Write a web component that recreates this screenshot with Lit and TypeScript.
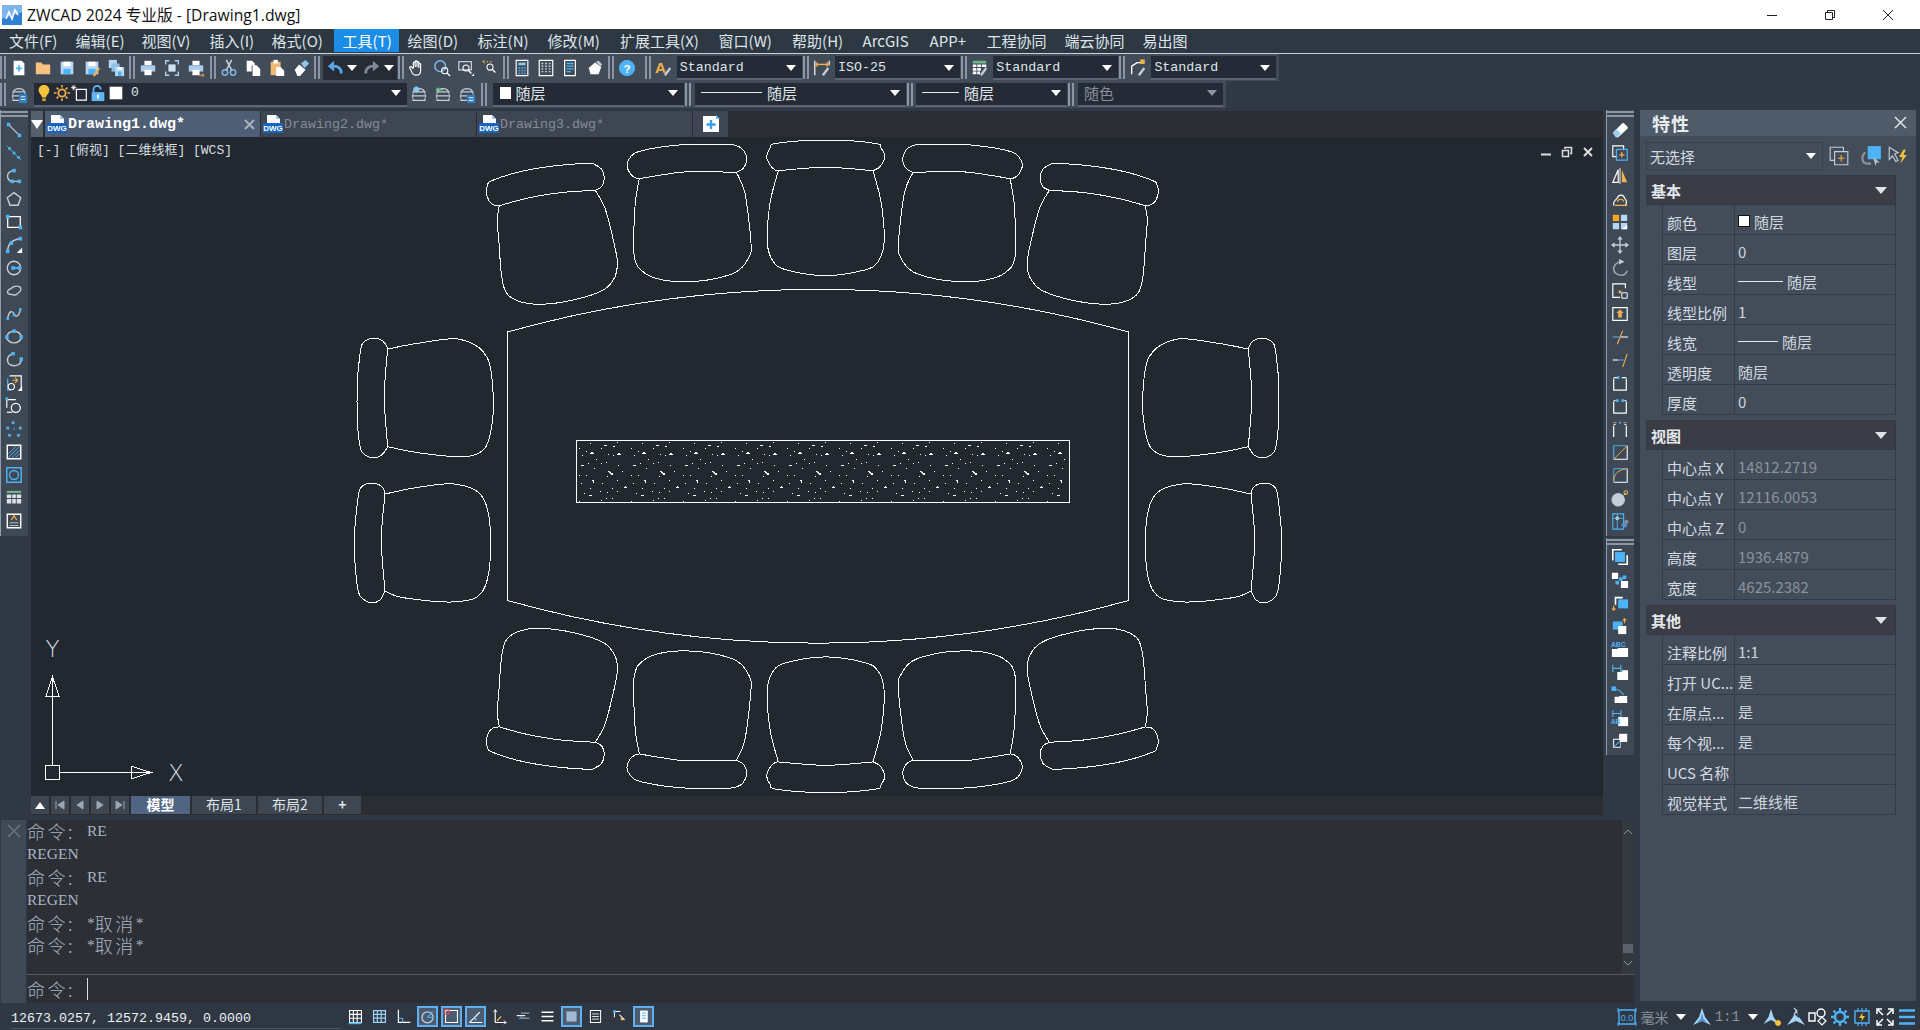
import { LitElement, html, css, svg } from 'lit'
import { customElement } from 'lit/decorators.js'

const W = '#ffffff'
const B = '#4db3f5'
const O = '#f2b04a'
const G = '#c3cedb'

// small drawing helpers for the 20x20 icons
const ln = (d: string, c = W, w = 1.3) => svg`<path d=${d} fill="none" stroke=${c} stroke-width=${w} />`
const fl = (d: string, c = W) => svg`<path d=${d} fill=${c} />`
const nd = (x: number, y: number, c = B, s = 4) => svg`<rect x=${x - s / 2} y=${y - s / 2} width=${s} height=${s} fill=${c} />`
const ci = (x: number, y: number, r: number, c = W, w = 1.3, f = 'none') => svg`<circle cx=${x} cy=${y} r=${r} fill=${f} stroke=${c} stroke-width=${w} />`
const pencil = ln('M11 18l6-8', G, 2.6)
const printer = [fl('M6 2h8v5H6z'), fl('M2 7h16v7H2z', '#a9cdee'), fl('M6 12h8v6H6z')]
const floppy = [fl('M3 3h14v14H3z', '#b9d6f2'), fl('M6 3h8v5H6z'), fl('M6 11h8v6H6z', B)]
const lens = (x: number, y: number) => [ci(x, y, 3.4, W, 1.2), ln(`M${x + 2.4} ${y + 2.4}l3.6 3.6`, W, 1.5)]
const stack = [ln('M4 6c2-4 10-4 12 0', G), ln('M2.5 6.5h15M2.5 11h15M2.5 16h15', G, 1.4), ln('M4 7l-1.5 4 1.5 5M16 7l1.5 4-1.5 5', G, 1)]

const ICONS: Record<string, unknown> = {
  new: [fl('M4 2h9l3 3v13H4z'), ln('M10 7v7M6.5 10.5h7', B, 2)],
  open: fl('M2 4h6l2 2h8v11H2z', '#f6c27f'),
  save: floppy,
  saveas: [floppy, ln('M12 19l6-9', O, 2.4)],
  saveall: [fl('M2 1h9v9H2z', '#b9d6f2'), fl('M5 5h9v9H5z', '#8fc0ea'), fl('M9 9h10v10H9z', '#b9d6f2'), fl('M12 14h4v5h-4z', B), fl('M11.5 9h5v3h-5z')],
  print: printer,
  preview: [ln('M3 6V2h4M13 2h4v4M17 14v4h-4M7 18H3v-4', '#9fd0f5', 1.6), fl('M6 6h8v8H6z', '#cfe0f0')],
  print2: [printer, ln('M13 18h6M17 16l2 2-2 2', O, 1)],
  cut: [ci(5.5, 15, 3, '#7db8ea', 1.6), ci(14.5, 15, 3, '#7db8ea', 1.6), ln('M7 12.5L13 1M13 12.5L7 1', G, 1.8)],
  copy: [fl('M3 2h6l3 3v9H3z'), fl('M9 7h5l4 4v8H9z'), ln('M9 7v12', '#414b58', 1)],
  paste: [fl('M3 3h11v15H3z', '#f0b877'), fl('M6 1h5v4H6z'), fl('M9 9h5l4 4v6H9z')],
  brush: [fl('M3 12l5-6 7 6-6 7H6z'), fl('M10 5l5-4 4 4-5 5z', '#8fc6f0')],
  undo: [ln('M17 16c0-5-3-8-9-8', '#5aa6e6', 3), fl('M9 2L2 8l7 6z', '#5aa6e6')],
  redo: [ln('M3 16c0-5 3-8 9-8', '#808a96', 3), fl('M11 2l7 6-7 6z', '#808a96')],
  pan: ln('M6 10V4.5a1 1 0 012 0V9M8 9V3a1 1 0 012 0v6M10 9V4a1 1 0 012 0v6M12 10V6a1 1 0 012 0v7c0 3-2 5-5 5s-4-1-5-4l-2-4c-.5-1 1-2 2-1l2 2'),
  zoomrt: [ci(8, 8, 6, '#7db8ea', 1.6), lens(13, 13)],
  zoomwin: [ln('M2 3h14v9H2z', G, 1.4), lens(10, 10), fl('M19 16v3h-3z')],
  zprev: [ln('M4 3H2M6 3h2M10 3h2', O, 1.2), ln('M2 3l2-2M2 3l2 2', O, 1), lens(10, 9)],
  calc: [ln('M3.5 1.5h13v17h-13z', W, 1.3), fl('M6 4h8v3H6z', '#8fc6f0'), ln('M6 10h2M9 10h2M12 10h2M6 13h2M9 13h2M12 13h2M6 16h2M9 16h2M12 16h2', B, 1.4)],
  gridtool: [ln('M2.5 1.5h15v17h-15z', W, 1.3), ln('M5 5h2M9 5h2M13 5h2M5 8h2M9 8h2M13 8h2M5 11h2M9 11h2M13 11h2M5 14h2M9 14h2M13 14h2', G, 1.6)],
  doc: [ln('M4 1.5h12v17H4z', W, 1.3), ln('M6 5h8M6 8h8M6 11h8M6 14h5', B, 1.4)],
  stamp: [fl('M3 10l7-6 7 5-3 8H5z'), fl('M11 3l5 5 2-2-4-4z', G)],
  help: [ci(10, 10, 8.5, B, 1, B), svg`<text x="10" y="15" text-anchor="middle" font-size="13" font-weight="700" font-family="Liberation Sans" fill="#fff">?</text>`],
  astyle: [svg`<text x="0" y="16" font-size="17" font-weight="700" font-family="Liberation Sans" fill=${O}>A</text>`, pencil],
  dimstyle: [ln('M2 2v16M18 2v5', W, 1.3), ln('M3 6h14', O, 1.6), ln('M5 3.5L3 6l2 2.5M15 3.5L17 6l-2 2.5', O, 1.2), pencil],
  tablestyle: [fl('M2 2h15v3H2z', '#6fb58a'), fl('M2 6h4v3H2zM7 6h4v3H7zM12 6h5v3h-5zM2 10h4v3H2zM7 10h4v3H7zM2 14h4v3H2zM7 14h3v3H7z'), pencil],
  mlstyle: [ln('M3 17V8l6-4h5', W, 1.5), nd(15, 3, O, 5), pencil],
  layer: [stack, fl('M10 9h9v10h-9z', '#2f7fc4'), ln('M12 12h5M12 15h5', W, 1)],
  layer2: [stack, ci(7, 4, 3, '#8fc6f0', 1, '#8fc6f0')],
  layer3: [stack, ln('M3 4h7M5 2L3 4l2 2', '#6fd08a', 1.5)],
  layer4: [stack, fl('M10 10h9v9h-9z', '#2f7fc4'), ln('M12 13h5M12 16h5', W, 1)],
  bulb: [fl('M10 1c4 0 6 3 6 6 0 3-3 5-4 8H8C7 12 4 10 4 7c0-3 2-6 6-6z', '#f5c33b'), fl('M8 16h4v3H8z', '#d9a32b')],
  sun: [ci(10, 10, 4, O, 2), ln('M10 1v3M10 16v3M1 10h3M16 10h3M4 4l2 2M14 14l2 2M16 4l-2 2M4 16l2-2', O, 1.8)],
  freeze: [ln('M6 6h11v12H6z', W, 1.3), ln('M3 1v6M0 4h6M1 2l4 4M5 2L1 6', W, .9)],
  lock: [ln('M5 9V6a4 4 0 018 0', '#5fb8f5', 2), fl('M3 9h14v10H3z', '#5fb8f5'), fl('M9 12h2v4H9z')],
  swatch: fl('M3 3h14v14H3z'),
  // left toolbar
  line: [ln('M4 4l12 12', G), nd(4, 4), nd(16, 16)],
  xline: [ln('M2 2l16 16', B, 1), nd(5, 5, B, 3), nd(10, 10, B, 3), nd(15, 15, B, 3)],
  pline: [ln('M10 4C4 4 2 9 3 12c1 3 3 4 5 4h8', G, 1.6), nd(10, 4), nd(8, 16), nd(16, 16)],
  polygon: ln('M10 3l7.5 5.5-3 8.5h-9l-3-8.5z', G, 1.6),
  rect: [ln('M3 4h14v12H3z', W, 1.4), nd(3, 4), nd(17, 16)],
  arc: [ln('M3 17C3 9 8 4 17 3', G, 1.6), nd(3, 17), nd(7, 8), nd(17, 3), fl('M19 13v6h-6z')],
  circle: [ci(10, 10, 7.5, G, 1.5), ln('M10 10h6', B, 2), nd(9, 10), nd(16, 10)],
  cloud: ln('M3 12c-1-3 2-4 4-5 2-2 6-3 8-2 3 0 3 3 2 5-1 2-3 2-4 4-2 1-4 0-5 0-2 0-4 0-5-2z', G, 1.5),
  spline: [ln('M3 14c2-8 5-8 7-4s5 3 7-4', G, 1.5), nd(3, 15, B, 3), nd(10, 11, B, 3), nd(17, 5, B, 3)],
  ellipse: [svg`<ellipse cx="10" cy="10" rx="8" ry="6.5" fill="none" stroke=${G} stroke-width="1.6" />`, nd(10, 3.5), nd(2, 10), nd(18, 10)],
  earc: [ln('M9 3C4 4 2 8 3 12s6 5 10 4 5-4 5-7', G, 1.6), nd(9, 3), nd(18, 9)],
  insert: [ln('M5 2h13v14', W, 1.3), ln('M3 5v13h4', B, 1.3), ln('M8 7h6M11 4l3 3-3 3', O, 1.2), ci(7, 14, 3.5, W, 1.2), fl('M19 14v5h-5z')],
  block: [ln('M2 3v9M2 3h10M12 3', W, 1.3), nd(2, 2, B, 3), ci(12, 12, 5, W, 1.4), ln('M2 17h6', W, 1.3)],
  points: [nd(9, 3, B, 3), nd(3, 9, B, 3), nd(17, 9, B, 3), nd(10, 10, '#2f7fc4', 2), nd(5, 17, B, 3), nd(15, 17, B, 3)],
  hatch: [ln('M2.5 2.5h15v15h-15z', W, 1.6), ln('M4 12l8-8M4 16l12-12M8 16l8-8M12 16l4-4', B, 1.1)],
  gradient: [ln('M2 2h16v16H2z', B, 1.6), ci(10, 10, 5, B, 1.5)],
  table: [fl('M2 2h16v2.5H2z', '#6fb58a'), fl('M2 6h5v4H2zM8 6h4v4H8zM13 6h5v4h-5zM2 11h5v5H2zM8 11h4v5H8zM13 11h5v5h-5z', '#dde3ea')],
  mtext: [ln('M2.5 2.5h15v15h-15z', W, 1.5), ln('M7 9l3-5 3 5', O, 1.3), ln('M5 12h10M5 15h10', G, 1)],
  // right toolbar, modify
  erase: [fl('M2 13L12 3c1-1 2-1 3 0l3 3c1 1 1 2 0 3L8 18H6z'), fl('M2 13l4-4 5 5-4 4H5z', '#9fcdf2')],
  copyo: [ln('M7 14H2V2h12v5', W, 1.3), ln('M6 6h12v12H6z', B, 1.4), ln('M12 9v6M9 12h6', O, 1.4)],
  mirror: [ln('M2 17L8 3v14z', W, 1.3), fl('M12 3l6 14h-6z', O), ln('M10 1v18', W, 1)],
  offset: [ln('M3 17c-1-4 2-6 4-8 1-4 7-5 8 0 2 2 3 5 1 8', W, 1.3), ln('M7 13c0-2 6-5 7 0M4 17h14', O, 1.3)],
  array: [fl('M2 2h7v7H2z', '#f5a623'), fl('M11 2h7v7h-7zM2 11h7v7H2z', '#b5d8f5'), fl('M11 11h7v7h-7z', '#b5d8f5'), fl('M18 13v5h-6z')],
  move: [ln('M10 2v16M2 10h16', G, 1.4), fl('M10 0l3 4H7zM10 20l-3-4h6zM0 10l4-3v6zM20 10l-4 3V7z', G)],
  rotate: [ln('M12 3C6 3 2 8 3 12s5 6 8 6 6-2 7-5', '#9aa7b6', 1.7), fl('M9 0l6 3-6 3z', G)],
  scale: [ln('M16 7V2H2v15h8', W, 1.3), nd(10, 11, O, 3), ln('M12 12h6v6h-6z', W, 1.1)],
  stretch: [ln('M2 3h16v14H2z', W, 1.3), fl('M10 5l4 4h-2v5H8V9H6z', O)],
  trim: [ln('M2 10h7', B, 1.2), ln('M11 10h8', W, 1.2), ln('M7 18l6-15', O, 1.2)],
  extend: [ln('M2 10h6', W, 1.2), ln('M8 10h6', B, 1.2), ln('M13 18l5-15', O, 1.2)],
  breakpt: [ln('M3 5v13h14V5', W, 1.3), ln('M3 4h4M12 4h5', W, 1.3), nd(8, 4, B, 3)],
  breakln: [ln('M3 5v13h14V5', W, 1.3), ln('M3 4h2M15 4h2', W, 1.3), nd(7, 4, B, 3), nd(13, 4, B, 3)],
  join: [ln('M3 6v13M17 6v13M3 5h2M15 5h2', W, 1.3), nd(10, 3, B, 2), ln('M3 3h3M17 3h-3', O, 1.1)],
  chamfer: [ln('M18 3v15H3', W, 1.2), ln('M3 3v15', B, 1.2), ln('M3 3h15', B, 1), ln('M3 18L18 3', O, 1)],
  fillet: [ln('M18 3v15H3', W, 1.2), ln('M3 3v15M3 3h15', B, 1), ln('M3 17C3 9 8 4 18 3', O, 1.1)],
  bomb: [ci(8, 12, 7, G, 1, G), ln('M14 7l2-2', W, 1), ci(16.5, 4, 2, O, 1.2)],
  props: [ln('M2 2h12v17H2z', B, 1.3), ln('M2 7h12M7 2v17', B, 1), ci(7, 7, 1.5, W, 1), fl('M12 13c2-2 5-1 6 1s-2 4-4 3-3-2-2-4z', '#4d8fd0'), ci(17, 11, 2, '#889', 1, '#889')],
  // right toolbar, draw order
  front: [ln('M2 14V2h10', W, 1.8), ln('M18 8v10H8', W, 1.8), fl('M4.500 4.500h11v11h-11z', B)],
  order2: [fl('M1 2h7v7H1zM11 11h8v8h-8z'), fl('M9 7h4v4H9z', B), fl('M5 11h4v4H5z', B), fl('M13 5h4v4h-4z', B)],
  above: [ln('M5 12V4h8', W, 1.8), fl('M8 6h11v10H8z', B), ln('M3 13v5', O, 1.4), ln('M1 16l2 2 2-2', O, 1.2)],
  under: [fl('M2 5h11v9H2z', B), fl('M8 10h9v9H8z'), ln('M15 7V2M13 4l2-2 2 2', O, 1.2)],
  ordertext: [svg`<text x="0" y="7.5" font-size="7.5" font-weight="700" font-family="Liberation Sans" fill=${B}>ABC</text>`, fl('M1 10h6l1-1h11v10H1z')],
  orderdim: [ln('M2 2v8M11 2v8M2 6h9', B, 1.3), fl('M7 10h5V8h7v11H7z')],
  orderlead: [nd(3, 3, B, 5), ln('M4 4c5-1 8 3 10 6', B, 1.3), fl('M4 12h5v-1h9v8H4z')],
  orderall: [ln('M2 1v8M11 1v8M2 5h9', B, 1.2), fl('M8 9h11v10H8z'), svg`<text x="0" y="17" font-size="7" font-weight="700" font-family="Liberation Sans" fill=${B}>AB</text>`],
  orderback: [fl('M9 2h9v9H9z'), ln('M3 8h7v9H3z', W, 1.2), fl('M4 9h6v7H4z', '#2f3844'), ln('M4 16l6-6', B, 1.2)],
  // status bar
  grid1: [ln('M3 3h14v14H3zM3 7.500h14M3 12h14M7.500 3v14M12 3v14', W, 1.3), ln('M2 18h15', B, 2)],
  grid2: ln('M3 3h14v14H3zM3 7.500h14M3 12h14M7.500 3v14M12 3v14', '#9fd0f5', 1.4),
  ortho: [ln('M4 2v15h14', W, 1.4), ln('M4 12h5v5', B, 1.2)],
  polar: [ci(10, 11, 6.5, G, 1.5), ln('M10 11l6-7M10 11h7', B, 1.2)],
  osnap: [ln('M3 3h14v14H3z', W, 1.3), ln('M2 2h5v5H2z', '#e84c4c', 1.4)],
  otrack: [ln('M3 17L15 5M3 17h15', W, 1.3), nd(10, 13, B, 3)],
  ducs: [ln('M5 2v15h13', W, 1.3), ln('M5 2L3 5M5 2l2 3M18 17l-3-2M18 17l-3 2', W, 1), ln('M7 15l5-5', O, 1.4)],
  dyn: [ln('M2 9h10', W, 1.3), ln('M7 6h10M7 12h10', G, 1), ln('M5 13l3-3', B, 1.3)],
  lwt: ln('M3 5h14M3 10h14M3 15h14', W, 2),
  transp: [fl('M4 4h12v12H4z', '#9fb8cf')],
  qp: [ln('M4 3h12v14H4z', W, 1.2), ln('M6 7h8M6 10h8M6 13h8', W, 1)],
  sel: [ln('M4 4h7M4 4v7', W, 1.2), nd(4, 4, B, 3), nd(13, 13, O, 3), ln('M10 8l6 6', W, 1.2)],
  model: [fl('M6 3h9v14H6z', W), ln('M8 6h5M8 9h5M8 12h5', B, 1.2)],
  paper: [ln('M2 3h16v14H2z', B, 1.4), ln('M1 1v4M19 1v4M1 15v4M19 15v4', B, 1), svg`<text x="10" y="14" text-anchor="middle" font-size="9" font-family="Liberation Sans" fill=${B}>0.0</text>`],
  anno: [fl('M10 1l3 9 6 8-9-4-9 4 6-8z', '#a9d3f5'), fl('M10 6l1.5 6 4 4-5.5-2-5.5 2 4-4z', '#4d96d8')],
  annoon: [fl('M8 2l2.5 8 5 7-7.5-4-7.5 4 5-7z', '#a9d3f5'), ci(15, 16, 2.5, '#f5c33b', 1, '#f5c33b')],
  annoauto: [fl('M10 2l3 8 6 8-9-4-9 4 6-8z', '#a9d3f5'), ln('M5 2l8 8', '#2f3743', 2), ln('M8 1l3 3-3 3', G, 1.2)],
  wsel: [ln('M1 6h6v8H1z', W, 1.4), ci(13, 6, 4, W, 1.4), ln('M10 14l4-4 4 4-4 4z', W, 1.2)],
  gear: [ci(10, 10, 5, B, 2.5), ln('M10 1v3M10 16v3M1 10h3M16 10h3M3.500 3.500l2 2M14.500 14.500l2 2M16.500 3.500l-2 2M3.500 16.500l2-2', B, 2.4)],
  hw: [ln('M3 4h14v12H3z', B, 1.4), ln('M6 1v3M10 1v3M14 1v3M6 16v3M10 16v3M14 16v3', B, 1.2), fl('M11 5l-4 6h3l-1 4 4-6h-3z', '#f5c33b')],
  full: ln('M2 7V2h5M2 2l6 6M13 2h5v5M18 2l-6 6M18 13v5h-5M18 18l-6-6M7 18H2v-5M2 18l6-6', W, 1.5),
  menu: ln('M2 3.500h16M2 10h16M2 16.500h16', B, 2.4),
  dwg: [fl('M4 1h9l4 4v9H4z'), fl('M13 1l4 4h-4z', '#9fc8ef'), fl('M0 9h20v10H0z', '#1765c0'), svg`<text x="10" y="17" text-anchor="middle" font-size="8" font-weight="700" font-family="Liberation Sans" fill="#fff">DWG</text>`],
  addtab: [fl('M2 2h13l3 3v13H2z'), fl('M15 1l4 4h-4z', '#7db8ea'), ln('M10 6v9M5.500 10.500h9', '#3c9be8', 2.4)],
  app: [fl('M0 0h20v20H0z', '#2f7fd6'), fl('M0 0h20v7L0 14z', '#7fb4ea'), ln('M4 14l3-7 3 7 3-9 3 5', W, 1.6)],
}

const ico = (name: string) => html`<svg class="ico" viewBox="0 0 20 20">${ICONS[name]}</svg>`
const slot = (name: string) => html`<span class="slot">${ico(name)}</span>`
const grip = () => html`<span class="grip"></span>`
const caret = () => html`<span class="caret"></span>`

// Catmull-Rom through the digitised points, the CAD polylines are all soft curves
function curve(p: number[][]) {
  let d = `M${p[0][0]} ${p[0][1]}`
  for (let i = 0; i < p.length - 1; i++) {
    const a = p[Math.max(i - 1, 0)], b = p[i], c = p[i + 1], e = p[Math.min(i + 2, p.length - 1)]
    const c1 = [b[0] + (c[0] - a[0]) / 6, b[1] + (c[1] - a[1]) / 6]
    const c2 = [c[0] - (e[0] - b[0]) / 6, c[1] - (e[1] - b[1]) / 6]
    d += `C${c1[0].toFixed(1)} ${c1[1].toFixed(1)} ${c2[0].toFixed(1)} ${c2[1].toFixed(1)} ${c[0].toFixed(1)} ${c[1].toFixed(1)}`
  }
  return d
}

// points read off the 3x crop whose origin is (320,130)
const crop = (p: number[][]) => p.map(([x, y]) => [320 + x / 3, 130 + y / 3])

const chair1 = [
  crop([[538, 227], [532, 270], [537, 340], [545, 440], [560, 490], [600, 515], [660, 523], [760, 510], [850, 480], [885, 440], [892, 395], [880, 330], [855, 235], [826, 181]]),
  crop([[538, 227], [620, 205], [720, 188], [826, 181]]),
  crop([[826, 181], [845, 170], [853, 145], [845, 118], [825, 104], [805, 100], [700, 108], [600, 125], [515, 152], [503, 165], [499, 187], [507, 212], [520, 224], [538, 227]]),
].map(curve).join('')

const chair2 = [
  crop([[958, 146], [945, 230], [943, 380], [975, 430], [1030, 450], [1100, 455], [1180, 447], [1250, 425], [1285, 385], [1293, 340], [1275, 190], [1249, 127]]),
  crop([[958, 146], [1030, 134], [1105, 125], [1249, 127]]),
  crop([[1249, 127], [1270, 115], [1280, 87], [1270, 60], [1250, 47], [1220, 43], [1110, 43], [1030, 50], [955, 65], [932, 80], [921, 105], [930, 130], [945, 143], [958, 146]]),
].map(curve).join('')

const chair3 = [
  crop([[1375, 122], [1350, 220], [1342, 340], [1360, 395], [1400, 420], [1517, 437], [1634, 420], [1674, 395], [1692, 340], [1684, 220], [1659, 122]]),
  crop([[1375, 122], [1517, 112], [1659, 122]]),
  crop([[1659, 122], [1680, 110], [1694, 80], [1684, 55], [1664, 40], [1517, 30], [1370, 40], [1350, 55], [1340, 80], [1350, 105], [1365, 120], [1375, 122]]),
].map(curve).join('')

const sideUpper = [
  [[387.7, 349], [385, 343.3], [380, 339.3], [373.3, 338.3], [366.7, 340], [361.7, 345], [359.3, 360], [357.3, 383.3], [357.3, 420], [359, 440], [361, 450], [365, 455], [373.3, 457.7], [381.7, 455], [387.7, 446.7]],
  [[387.7, 349], [384.3, 396.7], [387.7, 446.7]],
  [[387.7, 349], [420, 343], [460, 339.3], [486.7, 356.7], [493.3, 396.7], [491, 430], [483.3, 450], [463.3, 456.7], [420, 453], [387.7, 446.7]],
].map(curve).join('')

const sideLower = [
  [[385, 494], [383.3, 488.3], [378.3, 484.3], [371.7, 483.3], [365, 484.3], [360, 489], [357.7, 500], [354.3, 536.7], [355.3, 566.7], [358.3, 591.7], [363.3, 599.3], [371.7, 602.7], [380, 600], [385, 591]],
  [[385, 494], [381.3, 540], [385, 591]],
  [[385, 494], [420, 487], [456.7, 484.3], [483.3, 498.3], [490.7, 543.3], [483.3, 590], [456.7, 601.7], [403.3, 597.7], [385, 591]],
].map(curve).join('')

const flipX = (cx: number) => `matrix(-1 0 0 1 ${2 * cx} 0)`
const flipY = (cy: number) => `matrix(1 0 0 -1 0 ${2 * cy})`
const MID_Y = 466.3

// one 52x62 tile of the hatch: x, y, width
const HATCH = [[13, 2, 1], [27, 4, 3], [36, 5, 2], [40, 1, 1], [2, 7, 1], [24, 7, 1], [9, 10, 1], [5, 14, 1], [31, 13, 1], [36, 14, 1], [19, 18, 1], [11, 22, 1], [24, 22, 1], [29, 21, 1], [4, 24, 3], [41, 24, 1], [17, 27, 1], [45, 30, 1], [2, 34, 1], [9, 34, 1], [30, 35, 1], [25, 42, 1], [4, 42, 1], [40, 39, 1], [13, 47, 1], [35, 47, 1], [23, 50, 1], [30, 51, 1], [40, 50, 1], [7, 52, 1], [12, 54, 3], [29, 57, 1], [35, 57, 1], [24, 59, 1], [2, 60, 1], [8, 61, 1],
  // the bigger marks
  [14, 11, 2], [13, 12, 4], [41, 12, 2], [40, 13, 4], [31, 30, 2], [32, 31, 2], [33, 32, 3], [34, 33, 2], [15, 39, 2], [16, 40, 1], [16, 41, 1], [48, 45, 1], [47, 46, 3]]

function hatchPath() {
  let d = ''
  for (let t = 0; t < 10; t++) {
    for (const [x, y, w] of HATCH) {
      const px = x + t * 52
      if (px + w >= 492 || y >= 61) continue
      d += `M${577 + px} ${441 + y}h${w}v1h${-w}z`
    }
  }
  return d
}

const LEFT_TOOLS = ['line', 'xline', 'pline', 'polygon', 'rect', 'arc', 'circle', 'cloud', 'spline', 'ellipse', 'earc', 'insert', 'block', 'points', 'hatch', 'gradient', 'table', 'mtext']
const MODIFY_TOOLS = ['erase', 'copyo', 'mirror', 'offset', 'array', 'move', 'rotate', 'scale', 'stretch', 'trim', 'extend', 'breakpt', 'breakln', 'join', 'chamfer', 'fillet', 'bomb', 'props']
const ORDER_TOOLS = ['front', 'order2', 'above', 'under', 'ordertext', 'orderdim', 'orderlead', 'orderall', 'orderback']
// label and the distance to the next label
const MENUS: [string, number][] = [['文件(F)', 66.6], ['编辑(E)', 66], ['视图(V)', 68], ['插入(I)', 62], ['格式(O)', 71], ['工具(T)', 65], ['绘图(D)', 70], ['标注(N)', 70], ['修改(M)', 72.5], ['扩展工具(X)', 98.5], ['窗口(W)', 73.5], ['帮助(H)', 70.5], ['ArcGIS', 67], ['APP+', 57], ['工程协同', 78], ['端云协同', 78], ['易出图', 70]]
const STATUS = ['grid1', 'grid2', 'ortho', 'polar', 'osnap', 'otrack', 'ducs', 'dyn', 'lwt', 'transp', 'qp', 'sel', 'model']
const STATUS_ON = new Set(['polar', 'osnap', 'otrack', 'transp', 'model'])

interface Row { label: string; value?: string; kind?: 'color' | 'line'; len?: number; dim?: boolean }
const SECTIONS: { title: string; rows: Row[] }[] = [
  { title: '基本', rows: [
    { label: '颜色', value: '随层', kind: 'color' },
    { label: '图层', value: '0' },
    { label: '线型', value: '随层', kind: 'line', len: 45 },
    { label: '线型比例', value: '1' },
    { label: '线宽', value: '随层', kind: 'line', len: 40 },
    { label: '透明度', value: '随层' },
    { label: '厚度', value: '0' },
  ] },
  { title: '视图', rows: [
    { label: '中心点 X', value: '14812.2719', dim: true },
    { label: '中心点 Y', value: '12116.0053', dim: true },
    { label: '中心点 Z', value: '0', dim: true },
    { label: '高度', value: '1936.4879', dim: true },
    { label: '宽度', value: '4625.2382', dim: true },
  ] },
  { title: '其他', rows: [
    { label: '注释比例', value: '1:1' },
    { label: '打开 UC...', value: '是' },
    { label: '在原点...', value: '是' },
    { label: '每个视...', value: '是' },
    { label: 'UCS 名称', value: '' },
    { label: '视觉样式', value: '二维线框' },
  ] },
]

@customElement('app-root')
export class AppRoot extends LitElement {
  static styles = css`
    :host {
      display: block;
      width: 1920px;
      height: 1030px;
      overflow: hidden;
      background: #2f3844;
      font-family: 'Noto Sans CJK SC', sans-serif;
      font-size: 15px;
      color: #d3dae2;
    }
    .ico { width: 20px; height: 20px; display: block; flex: none; }
    .mono { font-family: 'Liberation Mono', 'Noto Sans CJK SC', monospace; }

    .title {
      height: 29px; background: #fff; color: #111; display: flex; align-items: center;
      font-family: 'Open Sans', 'Noto Sans CJK SC', sans-serif; font-size: 15.7px;
    }
    .title .ico { margin: 0 5px 0 2px; }
    .winbtns { margin-left: auto; display: flex; padding-right: 3px; }
    .winbtn { width: 58px; height: 29px; display: flex; align-items: center; justify-content: center; }
    .winbtn svg { width: 12px; height: 12px; }

    .menu { height: 25px; background: #2d3843; display: flex; align-items: flex-start; border-bottom: 1px solid #cbd2d9; color: #dfe5ea; box-sizing: border-box; }
    .menu span { padding-left: 9px; box-sizing: border-box; line-height: 23px; height: 23px; white-space: nowrap; flex: none; }
    .menu span.on { background: #1c8de6; color: #fff; }

    .tb { height: 27px; background: #424c59; display: flex; align-items: center; }
    .tb1 { width: 1279px; }
    .tb2 { width: 1226px; }
    .slot { width: 24.2px; height: 24px; display: flex; align-items: center; justify-content: center; flex: none; }
    .slot .ico { width: 18px; height: 18px; }
    .grip { width: 6px; height: 23px; margin: 0 1px; flex: none; border-left: 2px solid #8a96a5; border-right: 2px solid #8a96a5; box-sizing: border-box; }
    .tb > .grip:first-child { margin: 0 1px 0 0; }
    .grip.far { margin-left: 5.7px; }
    .undo { display: flex; align-items: center; background: #262b36; height: 24px; width: 74px; box-sizing: border-box; margin-left: 2px; flex: none; }
    .undo .ico { width: 18px; height: 18px; margin: 0 3px 0 5.5px; }
    .undo .ico:first-child { margin-left: 3px; }
    .caret { width: 0; height: 0; border-left: 5px solid transparent; border-right: 5px solid transparent; border-top: 6px solid #fff; flex: none; }
    .dd {
      height: 24px; background: #252b36; border-bottom: 2px solid #5b6573; box-sizing: border-box;
      display: flex; align-items: center; padding: 0 6px 0 3px; gap: 5px; flex: none; white-space: nowrap; color: #dfe5ea;
    }
    .dd .caret { margin-left: auto; }
    .dd.mono { font-size: 13.33px; padding-top: 2px; }
    .tb2 .dd { padding-bottom: 2px; }
    .w-style { width: 125px; margin-left: 1px; }
    .w-layer { width: 373px; margin-left: 2.8px; padding-left: 1px; gap: 0; }
    .w-layer .ico { width: 18px; height: 18px; }
    .w-color { width: 191.5px; margin-left: 5px; padding-left: 7px; }
    .w-type { width: 211px; margin-left: 3px; padding-left: 6px; }
    .w-weight { width: 151px; margin-left: 2px; padding-left: 6px; }
    .w-plot { width: 145px; margin-left: 3px; padding-left: 6px; color: #858e9a; }
    .w-plot .caret { border-top-color: #8b949f; }
    .sw { width: 11px; height: 12px; background: #fff; flex: none; }
    .rule { height: 1px; background: #e6eaee; flex: none; }
    .zero { margin-left: 6px; font-size: 13px; }

    .main { display: flex; height: 893px; margin-top: 2px; }
    .work { width: 1634px; display: flex; flex-direction: column; }
    .upper { height: 710px; display: flex; }

    .vbar { width: 28px; background: #3f4855; border-left: 1px solid #8f9cac; box-sizing: border-box; display: flex; flex-direction: column; align-items: center; padding-right: 2px; }
    .vgrip { width: calc(100% + 2px); height: 6px; border-top: 2px solid #8a96a5; border-bottom: 2px solid #8a96a5; box-sizing: border-box; margin-top: 1px; margin-right: -2px; flex: none; }
    .vslot { height: 23px; width: 100%; display: flex; align-items: center; justify-content: center; flex: none; }
    .vbar .ico { width: 18px; height: 18px; }
    .left { height: 426px; }
    .left .vgrip, .mod .vgrip { margin-bottom: 1.5px; }
    .rightcol { display: flex; flex-direction: column; gap: 2px; margin-left: 3px; }
    .mod { height: 426px; }
    .ord { height: 217px; }

    .center { width: 1572px; margin-left: 3px; display: flex; flex-direction: column; }
    .tabs { height: 26px; margin-top: 1px; background: #2a2d33; display: flex; align-items: stretch; gap: 1px; }
    .tabdrop { width: 12px; background: #54606a; display: flex; align-items: center; justify-content: center; margin-right: 1px; }
    .tabdrop .caret { border-left-width: 6px; border-right-width: 6px; border-top-width: 9px; }
    .tab { width: 215px; background: #3e4653; color: #848c98; display: flex; align-items: center; font-size: 13.33px; padding-left: 2px; gap: 1px; box-sizing: border-box; }
    .tab.on { background: #4e5e75; color: #fff; font-weight: 700; font-size: 15px; }
    .tabx { margin-left: auto; margin-right: 5px; width: 11px; height: 11px; }
    .tabadd { width: 35px; background: #3e4653; display: flex; align-items: center; justify-content: center; }
    .canvas { height: 659px; background: #212830; position: relative; }
    .canvas svg.draw { display: block; width: 1572px; height: 659px; }
    .viewlabel { position: absolute; left: 6px; top: 2px; font-size: 13px; color: #d8dde3; white-space: pre; }
    .vctl { position: absolute; left: 1509px; top: 9px; display: flex; gap: 9px; }
    .vctl svg { width: 12px; height: 12px; display: block; }
    .layouts { height: 19px; background: #2a2d33; display: flex; gap: 2px; font-size: 14px; }
    .lbtn { width: 18px; height: 18px; background: #3e4651; display: flex; align-items: center; justify-content: center; }
    .lbtn svg { width: 12px; height: 12px; }
    .ltab { width: 64px; height: 18px; background: #3e4651; display: flex; align-items: center; justify-content: center; color: #dfe5ea; padding-bottom: 2px; box-sizing: border-box; }
    .ltab.on { width: 59px; background: #506582; color: #fff; font-weight: 700; }
    .ltab.add { width: 37px; font-weight: 700; }

    .cmd { height: 183px; display: flex; gap: 1px; }
    .cmdstrip { width: 25px; background: #3f4956; margin-left: 1px; display: flex; justify-content: center; padding-top: 4px; box-sizing: border-box; }
    .cmdstrip svg { width: 14px; height: 14px; }
    .cmdbody { flex: 1; background: #2c2f36; display: flex; flex-direction: column; position: relative; }
    .hist { height: 155px; border-bottom: 1px solid #565a60; box-sizing: border-box; position: relative; }
    .ln { height: 22.8px; display: flex; align-items: center; white-space: pre; font-family: 'Liberation Serif', 'Noto Sans CJK SC', serif; font-size: 15.5px; color: #a9b5c4; }
    .zh { font-family: 'Noto Sans CJK SC', sans-serif; font-size: 18px; letter-spacing: 2.5px; font-weight: 300; }
    .prompt { display: inline-block; width: 60px; flex: none; }
    .cmdin { height: 27px; display: flex; align-items: center; }
    .cursor { width: 1px; height: 22px; background: #d8dde3; }
    .sbar { position: absolute; right: 0; top: 0; width: 12px; height: 154px; background: #34383f; }
    .sbar svg { position: absolute; left: 1px; width: 10px; height: 10px; }
    .thumb { position: absolute; left: 1px; right: 1px; top: 124px; height: 9px; background: #5d626a; }

    .props { width: 276px; margin-left: 6px; height: 891px; background: #434d5a; flex: none; display: flex; flex-direction: column; }
    .phead { height: 26px; background: #4f5b69; display: flex; align-items: center; font-size: 18px; font-weight: 700; padding-left: 12px; letter-spacing: 1px; color: #e8ecef; position: relative; }
    .phead svg { position: absolute; right: 9px; top: 6px; width: 13px; height: 13px; }
    .psel { display: flex; align-items: center; margin: 6px 0 5px 6px; }
    .psel .box { width: 177px; height: 28px; box-sizing: border-box; border: 1px solid #35404c; display: flex; align-items: center; padding: 0 6px 0 3px; }
    .psel .caret { margin-left: auto; }
    .psel .ico { margin-left: 5px; width: 22px; height: 22px; }
    .psel .ico.wide { margin-left: 10px; }
    .psec { margin-left: 6px; width: 250px; margin-bottom: 5px; }
    .phdr { height: 30px; box-sizing: border-box; background: #3a3d45; border: 1px solid #323a45; display: flex; align-items: center; padding: 0 8px 0 4px; font-weight: 700; color: #e4e8ec; }
    .phdr .caret { margin-left: auto; border-left-width: 6px; border-right-width: 6px; border-top-width: 7px; border-top-color: #dfe3e8; }
    .prow { height: 30px; margin-left: 16px; display: grid; grid-template-columns: 72px 1fr; box-sizing: border-box; border: 1px solid #323b46; border-top: 0; }
    .plabel { padding-left: 4px; display: flex; align-items: center; border-right: 1px solid #323b46; white-space: nowrap; overflow: hidden; padding-top: 6px; box-sizing: border-box; }
    .pval { padding-left: 3px; display: flex; align-items: center; gap: 4px; padding-top: 3px; box-sizing: border-box; color: #cdd6df; white-space: nowrap; }
    .pval.dim { color: #89929e; }
    .pval .swb { width: 10px; height: 10px; background: #fff; border: 1px solid #111; flex: none; }
    .pval .lin { height: 1px; background: #e6eaee; flex: none; }

    .status { height: 27px; background: #2f3743; display: flex; align-items: center; }
    .coord { width: 330px; margin-left: 11px; height: 24px; border-bottom: 1px solid #4a5360; box-sizing: border-box; font-size: 13.33px; color: #eef1f4; display: flex; align-items: center; padding-top: 5px; flex: none; }
    .stat { width: 24px; height: 24px; display: flex; align-items: center; justify-content: center; flex: none; }
    .coord + .stat { margin-left: 2px; }
    .stat .ico { width: 17px; height: 17px; }
    .stat.on .ico { background: #4b5b70; outline: 2px solid #5fb0f0; }
    .sright { margin-left: auto; margin-right: 3px; display: flex; align-items: center; color: #89929e; font-size: 14px; }
    .sright .ico { width: 20px; height: 20px; margin-left: 2.3px; }
    .sright .txt { margin-left: 3px; white-space: nowrap; }
    .sright .caret { margin: 0 3px 0 8px; }
  `

  private dd(cls: string, body: unknown) {
    return html`<div class="dd ${cls}">${body}${caret()}</div>`
  }

  private renderTitle() {
    return html`<div class="title">
      ${ico('app')}<span>ZWCAD 2024 专业版 - [Drawing1.dwg]</span>
      <div class="winbtns">
        <div class="winbtn"><svg viewBox="0 0 12 12"><path d="M1 6.5h10" stroke="#222" /></svg></div>
        <div class="winbtn"><svg viewBox="0 0 12 12"><path d="M1.5 3.5h7v7h-7zM3.5 3V1.5h7v7H9" fill="none" stroke="#222" /></svg></div>
        <div class="winbtn"><svg viewBox="0 0 12 12"><path d="M1 1l10 10M11 1L1 11" stroke="#222" /></svg></div>
      </div>
    </div>`
  }

  private renderMenu() {
    return html`<div class="menu">${MENUS.map(([m, w]) => html`<span class=${m === '工具(T)' ? 'on' : ''} style="width:${w}px">${m}</span>`)}</div>`
  }

  private renderToolbars() {
    return html`
      <div class="tb tb1">
        ${grip()}${['new', 'open', 'save', 'saveas', 'saveall'].map(slot)}
        ${grip()}${['print', 'preview', 'print2'].map(slot)}
        ${grip()}${['cut', 'copy', 'paste', 'brush'].map(slot)}
        ${grip()}
        <div class="undo">${ico('undo')}${caret()}${ico('redo')}${caret()}</div>
        ${grip()}${['pan', 'zoomrt', 'zoomwin', 'zprev'].map(slot)}
        ${grip()}${['calc', 'gridtool', 'doc', 'stamp'].map(slot)}
        ${grip()}${slot('help')}
        <span class="grip far"></span>${slot('astyle')}
        ${this.dd('mono w-style', html`<span>Standard</span>`)}
        ${grip()}${slot('dimstyle')}
        ${this.dd('mono w-style', html`<span>ISO-25</span>`)}
        ${grip()}${slot('tablestyle')}
        ${this.dd('mono w-style', html`<span>Standard</span>`)}
        ${grip()}${slot('mlstyle')}
        ${this.dd('mono w-style', html`<span>Standard</span>`)}
      </div>
      <div class="tb tb2">
        ${grip()}${slot('layer')}
        ${this.dd('w-layer', html`${['bulb', 'sun', 'freeze', 'lock', 'swatch'].map(ico)}<span class="mono zero">0</span>`)}
        ${['layer2', 'layer3', 'layer4'].map(slot)}
        ${grip()}
        ${this.dd('w-color', html`<span class="sw"></span><span>随层</span>`)}
        ${grip()}
        ${this.dd('w-type', html`<span class="rule" style="width:61px"></span><span>随层</span>`)}
        ${grip()}
        ${this.dd('w-weight', html`<span class="rule" style="width:37px"></span><span>随层</span>`)}
        ${grip()}
        ${this.dd('w-plot', html`<span>随色</span>`)}
      </div>`
  }

  private renderDrawing() {
    const top = [
      svg`<path d=${chair1} />`,
      svg`<path d=${chair2} />`,
      svg`<path d=${chair3} />`,
      svg`<path d=${chair2} transform=${flipX(824.7)} />`,
      svg`<path d=${chair1} transform=${flipX(822.3)} />`,
    ]
    return html`<svg class="draw" viewBox="31 137 1572 659" fill="none" stroke="#fff" stroke-width="1" shape-rendering="crispEdges">
      ${top}
      <g transform=${flipY(MID_Y)}>${top}</g>
      <path d=${sideUpper} />
      <path d=${sideLower} />
      <path d=${sideUpper} transform=${flipX(818)} />
      <path d=${sideLower} transform=${flipX(818)} />
      <path d="M507.5 332A1152 1152 0 0 1 1128.5 332V600.5A1152 1152 0 0 1 507.5 600.5Z" />
      <rect x="576.5" y="440.5" width="493" height="62" stroke-width="1.4" />
      <path d=${hatchPath()} fill="#fff" stroke="none" />
      <path d="M52.5 765V677M46 696L52.5 677L59 696ZM60 772.5H151M131 766L151 772.5L131 779Z" />
      <rect x="45.5" y="765.5" width="14" height="14" stroke-width="1.4" />
      <text x="52.5" y="657" text-anchor="middle" font-size="23" font-family="DejaVu Sans" font-weight="200" fill="#d8dde3" stroke="none" shape-rendering="auto">Y</text>
      <text x="176" y="781" text-anchor="middle" font-size="23" font-family="DejaVu Sans" font-weight="200" fill="#d8dde3" stroke="none" shape-rendering="auto">X</text>
    </svg>`
  }

  private renderTabs() {
    const x = html`<svg class="tabx" viewBox="0 0 11 11"><path d="M1 1l9 9M10 1l-9 9" stroke="#aab3bd" stroke-width="2" /></svg>`
    return html`<div class="tabs">
      <div class="tabdrop">${caret()}</div>
      <div class="tab mono on">${ico('dwg')}<span>Drawing1.dwg*</span>${x}</div>
      <div class="tab mono">${ico('dwg')}<span>Drawing2.dwg*</span></div>
      <div class="tab mono">${ico('dwg')}<span>Drawing3.dwg*</span></div>
      <div class="tabadd">${ico('addtab')}</div>
    </div>`
  }

  private renderLayouts() {
    const nav = ['M6 3l5 7H1z', 'M2 2v8M10 2L4 6l6 4z', 'M9 2L3 6l6 4z', 'M3 2l6 4-6 4z', 'M10 2v8M2 2l6 4-6 4z']
    return html`<div class="layouts">
      ${nav.map((d, i) => html`<div class="lbtn"><svg viewBox="0 0 12 12"><path d=${d} fill=${i === 0 ? '#fff' : '#9ca6b2'} stroke=${i === 0 ? 'none' : '#9ca6b2'} /></svg></div>`)}
      <div class="ltab on">模型</div><div class="ltab">布局1</div><div class="ltab">布局2</div><div class="ltab add">+</div>
    </div>`
  }

  private renderCommand() {
    return html`<div class="cmd">
      <div class="cmdstrip"><svg viewBox="0 0 14 14"><path d="M1 1l12 12M13 1L1 13" stroke="#69727e" stroke-width="1.6" /></svg></div>
      <div class="cmdbody">
        <div class="hist">
          ${this.promptLine('RE')}
          <div class="ln">REGEN</div>
          ${this.promptLine('RE')}
          <div class="ln">REGEN</div>
          ${this.cancelLine()}
          ${this.cancelLine()}
          <div class="sbar">
            <svg viewBox="0 0 10 10" style="top:7px"><path d="M1 7l4-4 4 4" fill="none" stroke="#8b939d" /></svg>
            <div class="thumb"></div>
            <svg viewBox="0 0 10 10" style="top:138px"><path d="M1 3l4 4 4-4" fill="none" stroke="#8b939d" /></svg>
          </div>
        </div>
        <div class="cmdin ln"><span class="prompt zh">命令:</span><span class="cursor"></span></div>
      </div>
    </div>`
  }

  private promptLine(t: string) {
    return html`<div class="ln"><span class="prompt zh">命令:</span>${t}</div>`
  }

  private cancelLine() {
    return html`<div class="ln"><span class="prompt zh">命令:</span>*<span class="zh">取消</span>*</div>`
  }

  private renderProps() {
    return html`<div class="props">
      <div class="phead">特性<svg viewBox="0 0 13 13"><path d="M1 1l11 11M12 1L1 12" stroke="#e8ecef" stroke-width="1.4" /></svg></div>
      <div class="psel">
        <div class="box">无选择${caret()}</div>
        <svg class="ico" viewBox="0 0 20 20">${[ln('M6 14H2V2h12v4', G, 1), ln('M6 6h12v12H6z', G, 1), ln('M12 9v6M9 12h6', O, 1)]}</svg>
        <svg class="ico wide" viewBox="0 0 20 20">${[fl('M7 1h12v12H7z', '#4db3f5'), ln('M5 7C1 9 1 17 7 17h3', '#8a939e', 2), fl('M12 11l6 5-3 0-1 3z', '#b8c2cd')]}</svg>
        <svg class="ico" viewBox="0 0 20 20">${[ln('M2 2l8 5-3 1 3 6-2 1-3-5-3 3z', G, 1), fl('M15 4l-4 7h3l-2 6 6-8h-3l2-5z', '#f5c33b')]}</svg>
      </div>
      ${SECTIONS.map(s => html`<div class="psec">
        <div class="phdr">${s.title}${caret()}</div>
        ${s.rows.map(r => html`<div class="prow">
          <div class="plabel">${r.label}</div>
          <div class="pval ${r.dim ? 'dim' : ''}">
            ${r.kind === 'color' ? html`<span class="swb"></span>` : ''}
            ${r.kind === 'line' ? html`<span class="lin" style="width:${r.len}px"></span>` : ''}
            ${r.value}
          </div>
        </div>`)}
      </div>`)}
    </div>`
  }

  private renderStatus() {
    return html`<div class="status">
      <div class="coord mono">12673.0257, 12572.9459, 0.0000</div>
      ${STATUS.map(s => html`<div class="stat ${STATUS_ON.has(s) ? 'on' : ''}">${ico(s)}</div>`)}
      <div class="sright">
        ${ico('paper')}<span class="txt">毫米</span>${caret()}
        ${ico('anno')}<span class="txt mono">1:1</span>${caret()}
        ${['annoon', 'annoauto', 'wsel', 'gear', 'hw', 'full', 'menu'].map(ico)}
      </div>
    </div>`
  }

  render() {
    const vslot = (n: string) => html`<div class="vslot">${ico(n)}</div>`
    return html`
      ${this.renderTitle()}
      ${this.renderMenu()}
      ${this.renderToolbars()}
      <div class="main">
        <div class="work">
          <div class="upper">
            <div class="vbar left"><div class="vgrip"></div>${LEFT_TOOLS.map(vslot)}</div>
            <div class="center">
              ${this.renderTabs()}
              <div class="canvas">
                ${this.renderDrawing()}
                <div class="viewlabel mono">[-] [俯视] [二维线框] [WCS]</div>
                <div class="vctl">
                  <svg viewBox="0 0 12 12"><path d="M1 8.5h10" stroke="#ddd" stroke-width="2" /></svg>
                  <svg viewBox="0 0 12 12"><path d="M1.5 4.5h6v6h-6zM4 3V1.5h6.500v6H9" fill="none" stroke="#ddd" stroke-width="1.500" /></svg>
                  <svg viewBox="0 0 12 12"><path d="M2 2l8 8M10 2l-8 8" stroke="#ddd" stroke-width="2" /></svg>
                </div>
              </div>
              ${this.renderLayouts()}
            </div>
            <div class="rightcol">
              <div class="vbar mod"><div class="vgrip"></div>${MODIFY_TOOLS.map(vslot)}</div>
              <div class="vbar ord"><div class="vgrip"></div>${ORDER_TOOLS.map(vslot)}</div>
            </div>
          </div>
          ${this.renderCommand()}
        </div>
        ${this.renderProps()}
      </div>
      ${this.renderStatus()}
    `
  }
}
